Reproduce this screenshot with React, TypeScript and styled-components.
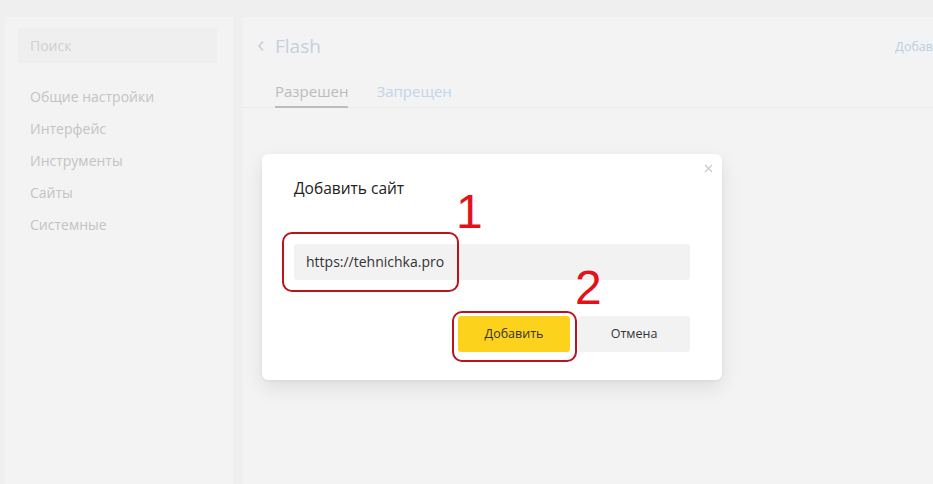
import React from "react";
import styled, { createGlobalStyle } from "styled-components";

const GlobalStyle = createGlobalStyle`
  html, body {
    margin: 0;
    padding: 0;
    background: #efefef;
    font-family: "Open Sans", "Noto Sans", sans-serif;
    overflow: hidden;
  }
`;

const menu = ["Общие настройки", "Интерфейс", "Инструменты", "Сайты", "Системные"];

const App: React.FC = () => {
  return (
    <>
      <GlobalStyle />
      <Page>
        <Sidebar>
          <Search>Поиск</Search>
          <Menu>
            {menu.map((item) => (
              <MenuItem key={item}>{item}</MenuItem>
            ))}
          </Menu>
        </Sidebar>
        <Main>
          <Header>
            <Back>
              <svg width="8" height="12" viewBox="0 0 8 12">
                <path d="M6 1.5L2 6l4 4.5" fill="none" stroke="#c5d0de" strokeWidth="1.6" />
              </svg>
              <Title>Flash</Title>
            </Back>
            <AddLink>Добав</AddLink>
          </Header>
          <Tabs>
            <Tab active>Разрешен</Tab>
            <Tab>Запрещен</Tab>
          </Tabs>
          <Body>
            <Modal>
              <Close>
                <svg width="9" height="9" viewBox="0 0 9 9">
                  <path d="M1 1l7 7M8 1L1 8" stroke="#c8c8c8" strokeWidth="1.1" />
                </svg>
              </Close>
              <ModalTitle>Добавить сайт</ModalTitle>
              <Input>https://tehnichka.pro</Input>
              <Actions>
                <Button primary>Добавить</Button>
                <Button>Отмена</Button>
              </Actions>
              <Mark style={{ left: 20, top: 78, width: 173, height: 56 }} />
              <Mark style={{ left: 190, top: 157, width: 121, height: 47 }} />
              <Num style={{ left: 194, top: 34 }}>1</Num>
              <Num style={{ left: 313, top: 110 }}>2</Num>
            </Modal>
          </Body>
        </Main>
      </Page>
    </>
  );
};

export default App;

const Page = styled.div`
  display: flex;
  gap: 10px;
  height: 484px;
  padding: 17px 0 0 5px;
  box-sizing: border-box;
`;

const Sidebar = styled.aside`
  width: 228px;
  flex-shrink: 0;
  background: #f3f3f3;
  padding: 11px 16px 0 13px;
  box-sizing: border-box;
`;

const Search = styled.div`
  height: 35px;
  background: #efefef;
  color: #d0d0d0;
  font-size: 14px;
  line-height: 35px;
  padding-left: 12px;
`;

const Menu = styled.div`
  display: flex;
  flex-direction: column;
  margin-top: 18px;
`;

const MenuItem = styled.div`
  height: 32px;
  line-height: 32px;
  font-size: 14px;
  color: #c3c3c3;
  padding-left: 12px;
`;

const Main = styled.main`
  flex: 1;
  background: #f3f3f3;
  display: flex;
  flex-direction: column;
`;

const Header = styled.div`
  display: flex;
  align-items: center;
  justify-content: space-between;
  height: 58px;
  padding-left: 14px;
`;

const Back = styled.div`
  display: flex;
  align-items: center;
  gap: 10px;
`;

const Title = styled.span`
  font-size: 19px;
  color: #c5d0de;
`;

const AddLink = styled.span`
  font-size: 12.5px;
  color: #c6ccd4;
  background: #f0f3f7;
  padding: 2px 0 2px 2px;
  white-space: nowrap;
`;

const Tabs = styled.div`
  display: flex;
  gap: 28px;
  padding-left: 32px;
  border-bottom: 1px solid #ebebeb;
`;

const Tab = styled.div<{ active?: boolean }>`
  font-size: 15px;
  padding: 6px 0 5px;
  color: ${(p) => (p.active ? "#bcbcbc" : "#c2d5ec")};
  border-bottom: 2px solid ${(p) => (p.active ? "#bcbcbc" : "transparent")};
  margin-bottom: -1px;
`;

const Body = styled.div`
  flex: 1;
  padding: 46px 0 0 19px;
`;

const Modal = styled.div`
  position: relative;
  width: 460px;
  height: 226px;
  box-sizing: border-box;
  background: #fff;
  border-radius: 6px;
  box-shadow: 0 8px 20px rgba(0, 0, 0, 0.09), 0 1px 3px rgba(0, 0, 0, 0.06);
  padding: 22px 32px 0;
`;

const Close = styled.div`
  position: absolute;
  top: 10px;
  right: 9px;
  line-height: 0;
`;

const ModalTitle = styled.div`
  font-size: 15.5px;
  color: #222;
  line-height: 24px;
`;

const Input = styled.div`
  margin-top: 44px;
  height: 36px;
  line-height: 36px;
  background: #f2f2f2;
  border-radius: 3px;
  padding-left: 12px;
  font-size: 14px;
  color: #333;
`;

const Actions = styled.div`
  display: flex;
  justify-content: flex-end;
  gap: 8px;
  margin-top: 36px;
`;

const Button = styled.div<{ primary?: boolean }>`
  width: 112px;
  height: 36px;
  line-height: 36px;
  text-align: center;
  border-radius: 3px;
  font-size: 12.5px;
  color: #333;
  background: ${(p) => (p.primary ? "#fdd21d" : "#f2f2f2")};
`;

const Mark = styled.div`
  position: absolute;
  border: 2px solid #b8141c;
  border-radius: 10px;
`;

const Num = styled.div`
  position: absolute;
  font-family: "Liberation Sans", Arial, sans-serif;
  font-size: 48px;
  line-height: 48px;
  color: #e3121a;
`;
